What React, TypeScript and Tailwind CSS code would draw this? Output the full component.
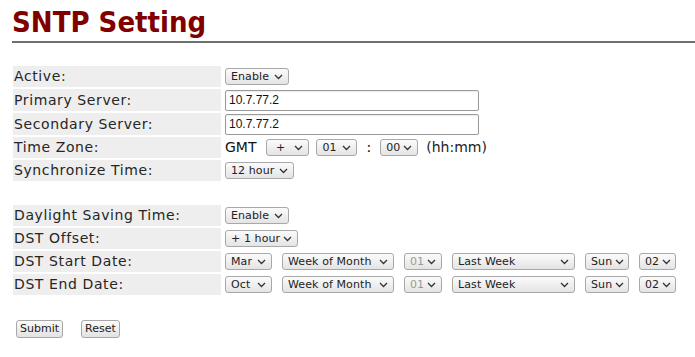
import React from "react";

const Chevron = () => (
  <svg width="9" height="6" viewBox="0 0 9 6" className="shrink-0">
    <path d="M1 1 L4.5 4.5 L8 1" fill="none" stroke="#333" strokeWidth="1.3" />
  </svg>
);

function Sel({ label, w, disabled }: { label: string; w: number; disabled?: boolean }) {
  return (
    <span
      style={{ width: w }}
      className={`inline-flex h-[17px] items-center justify-between rounded-[3px] border border-[#a8a8a8] bg-gradient-to-b from-[#fbfbfb] to-[#e4e4e4] pl-[5px] pr-[5px] text-[11px] leading-none ${
        disabled ? "text-[#9a9a9a]" : "text-[#222]"
      }`}
    >
      <span className="mr-[3px] tracking-[0.1px] whitespace-pre">{label}</span>
      <Chevron />
    </span>
  );
}

function Row({ label, children, h = 21 }: { label: string; children?: React.ReactNode; h?: number }) {
  return (
    <div className="flex gap-[4px]" style={{ height: h }}>
      <div className="flex w-[208px] items-center bg-[#eeeeee] pl-[1px] text-[14px] tracking-[0.6px] text-[#262626]">
        {label}
      </div>
      <div className="flex items-center gap-[10px]">{children}</div>
    </div>
  );
}

function TextInput({ value }: { value: string }) {
  return (
    <div className="flex h-[21px] w-[254px] items-center rounded-[2px] border border-[#9a9a9a] bg-white pl-[3px] font-['Liberation_Sans'] text-[12px] text-[#111] shadow-[inset_0_1px_1px_rgba(0,0,0,0.08)]">
      {value}
    </div>
  );
}

function Btn({ label }: { label: string }) {
  return (
    <span className="inline-flex h-[18px] items-center rounded-[3px] border border-[#a8a8a8] bg-gradient-to-b from-[#fbfbfb] to-[#e2e2e2] px-[3px] text-[11px] text-[#222]">
      {label}
    </span>
  );
}

export default function App() {
  return (
    <div className="min-h-[357px] w-[695px] bg-white font-['DejaVu_Sans',sans-serif]">
      <div className="pl-[12px]">
        <h1 className="h-[43px] border-b-2 border-[#707070] pt-[5px] text-[29px] font-bold leading-[34px] text-[#800000] [font-stretch:condensed]">
          SNTP Setting
        </h1>
      </div>
      <div className="ml-[13px] mt-[23px] flex flex-col gap-[2px]">
        <Row label="Active:">
          <Sel label="Enable" w={64} />
        </Row>
        <Row label="Primary Server:" h={22}>
          <TextInput value="10.7.77.2" />
        </Row>
        <Row label="Secondary Server:" h={22}>
          <TextInput value="10.7.77.2" />
        </Row>
        <Row label="Time Zone:">
          <span className="text-[14px] text-[#111]">GMT</span>
          <span className="flex items-center gap-[7px]">
            <Sel label=" +" w={43} />
            <Sel label="01" w={41} />
            <span className="mx-[2px] text-[14px]">:</span>
            <Sel label="00" w={38} />
            <span className="ml-[1px] text-[14px] text-[#222]">(hh:mm)</span>
          </span>
        </Row>
        <Row label="Synchronize Time:">
          <Sel label="12 hour" w={69} />
        </Row>
      </div>
      <div className="ml-[13px] mt-[24px] flex flex-col gap-[2px]">
        <Row label="Daylight Saving Time:">
          <Sel label="Enable" w={64} />
        </Row>
        <Row label="DST Offset:">
          <Sel label="+ 1 hour" w={73} />
        </Row>
        <Row label="DST Start Date:">
          <Sel label="Mar" w={47} />
          <Sel label="Week of Month" w={112} />
          <Sel label="01" w={38} disabled />
          <Sel label="Last Week" w={123} />
          <Sel label="Sun" w={44} />
          <Sel label="02" w={37} />
        </Row>
        <Row label="DST End Date:">
          <Sel label="Oct" w={47} />
          <Sel label="Week of Month" w={112} />
          <Sel label="01" w={38} disabled />
          <Sel label="Last Week" w={123} />
          <Sel label="Sun" w={44} />
          <Sel label="02" w={37} />
        </Row>
      </div>
      <div className="ml-[16px] mt-[25px] flex gap-[18px]">
        <Btn label="Submit" />
        <Btn label="Reset" />
      </div>
    </div>
  );
}
